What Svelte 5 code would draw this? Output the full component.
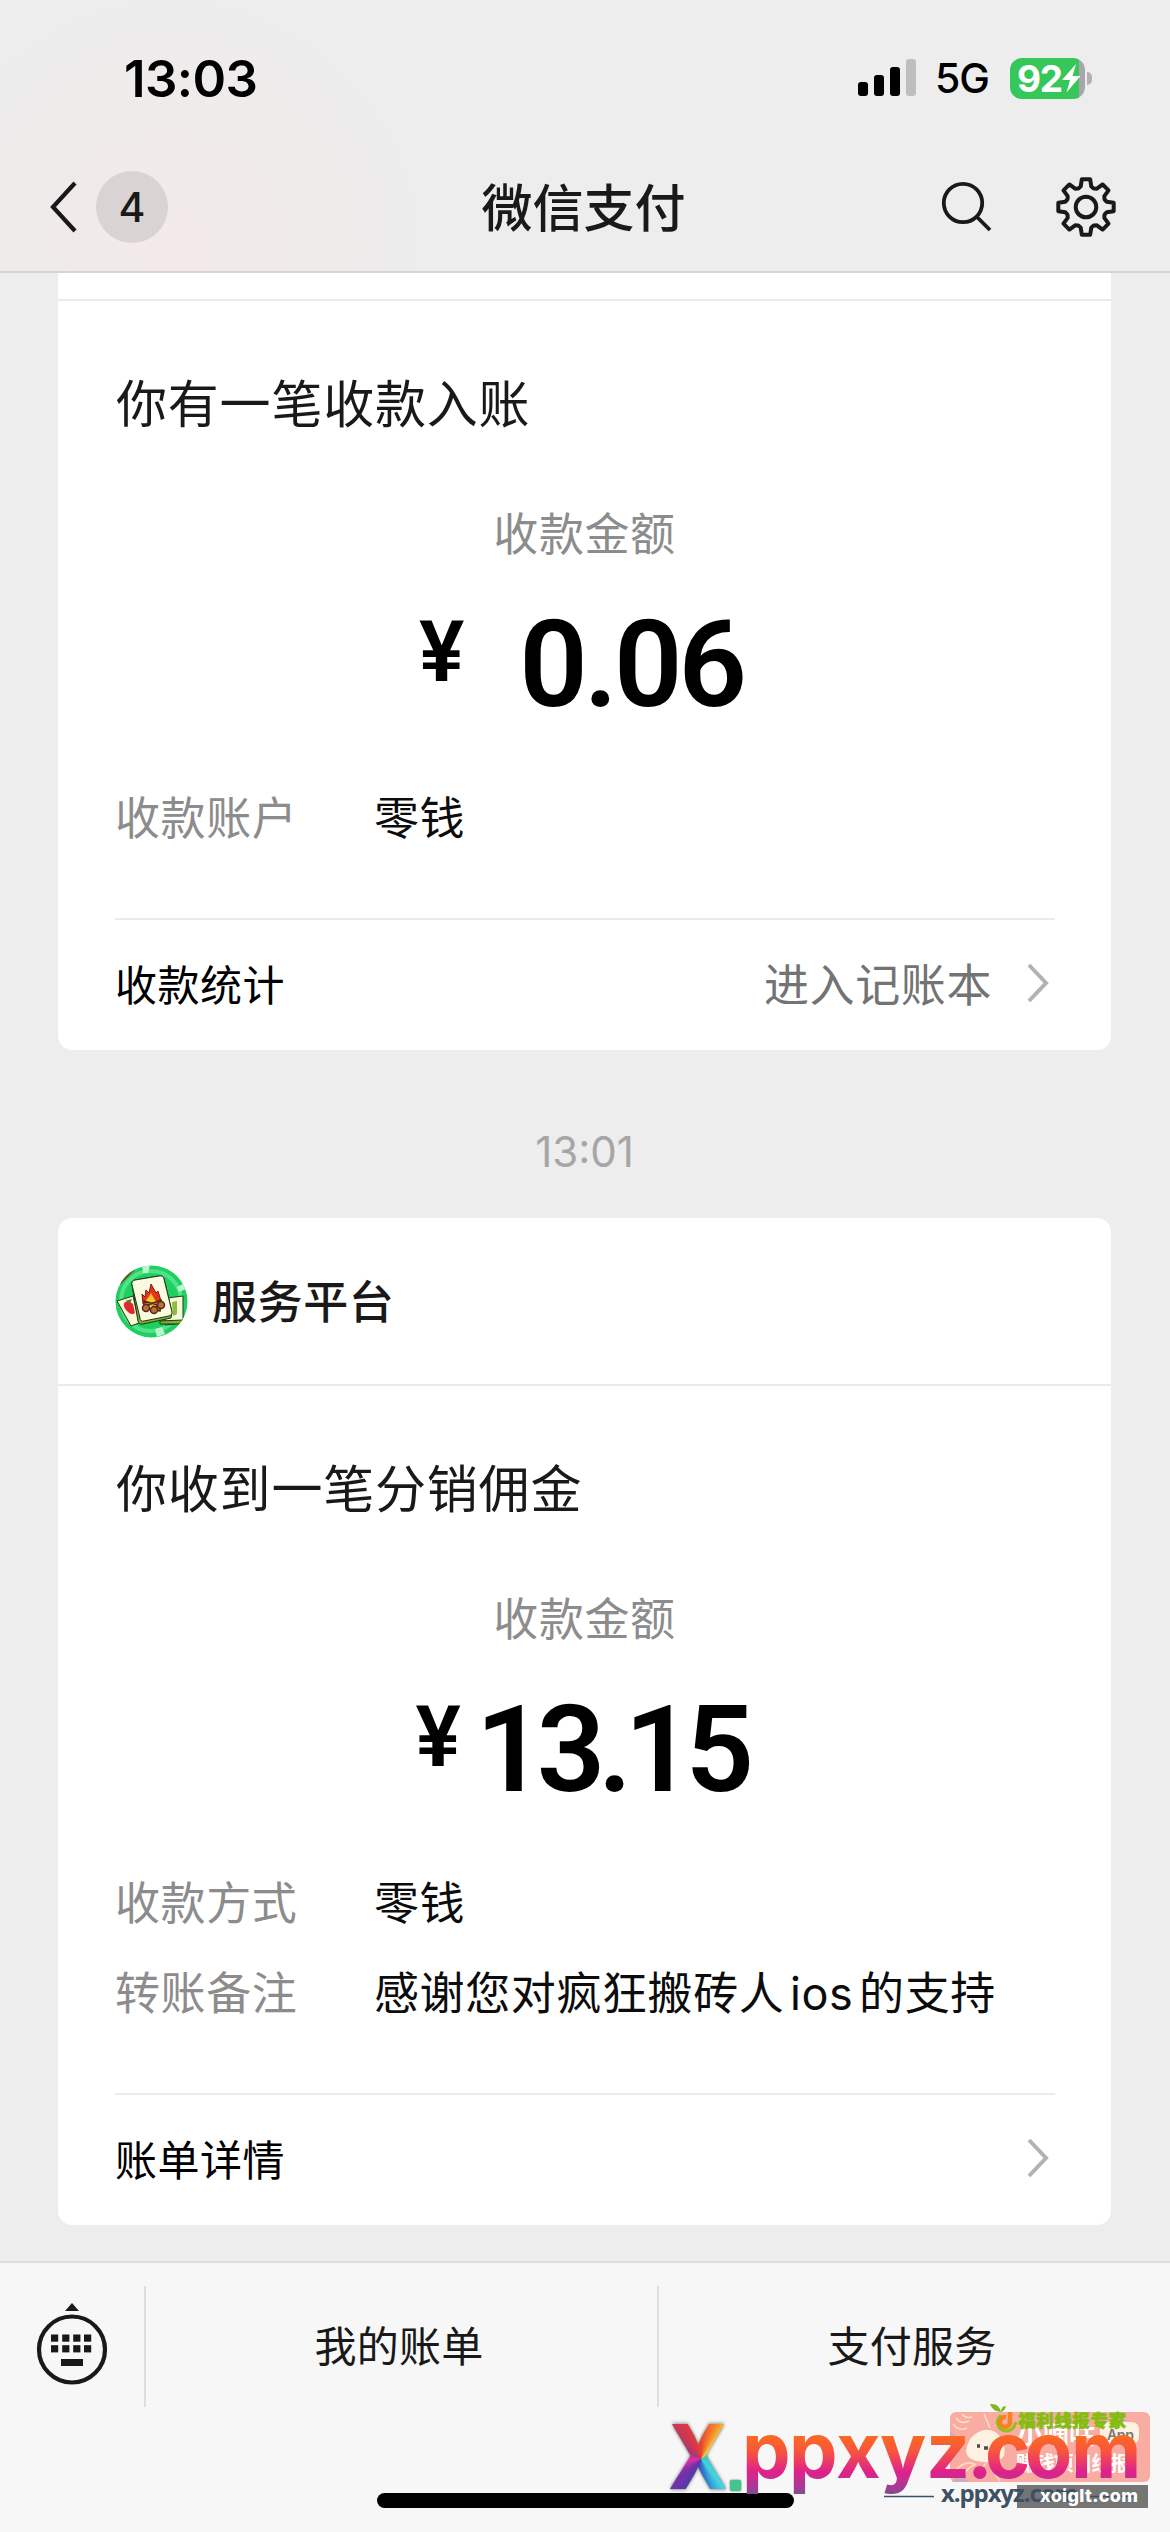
<!--
  WeChat Pay service conversation: status bar, nav bar, two payment cards,
  the service menu along the bottom and the site stamps over it.
-->
<script lang="ts">
  interface Row {
    label: string;
    value: string;
  }

  interface Card {
    sender?: string;
    title: string;
    amount: string;
    padded?: boolean;
    rows: Row[];
    footer: string;
    link?: string;
  }

  const income: Card = {
    title: "你有一笔收款入账",
    amount: "0.06",
    padded: true,
    rows: [{ label: "收款账户", value: "零钱" }],
    footer: "收款统计",
    link: "进入记账本",
  };

  const commission: Card = {
    sender: "服务平台",
    title: "你收到一笔分销佣金",
    amount: "13.15",
    rows: [
      { label: "收款方式", value: "零钱" },
      { label: "转账备注", value: "感谢您对疯狂搬砖人ios的支持" },
    ],
    footer: "账单详情",
  };

  const menu = ["我的账单", "支付服务"];
  const keys = [15, 26.2, 37.2, 48];

  /** Outline of the settings gear: eight tapered teeth around (32, 32). */
  function gearPath(): string {
    const pts: string[] = [];
    for (let i = 0; i < 8; i++) {
      const mid = (i * Math.PI) / 4;
      for (const [r, off] of [
        [20.2, -0.36],
        [21.3, -0.25],
        [28, -0.15],
        [28, 0.15],
        [21.3, 0.25],
        [20.2, 0.36],
      ]) {
        pts.push(`${(32 + r * Math.sin(mid + off)).toFixed(2)} ${(32 - r * Math.cos(mid + off)).toFixed(2)}`);
      }
    }
    return "M" + pts.join("L") + "Z";
  }
</script>

{#snippet card(c: Card)}
  <section class="card" class:is-cut={!c.sender}>
    <header class="card-head">
      {#if c.sender}
        <svg class="avatar" viewBox="0 0 73 73" aria-hidden="true">
          <defs>
            <clipPath id="disc"><circle cx="36.5" cy="36.5" r="36" /></clipPath>
          </defs>
          <g clip-path="url(#disc)">
            <rect width="73" height="73" fill="#20cf60" />
            <circle cx="36" cy="36" r="30" fill="none" stroke="#4fe38a" stroke-width="4" />
            <path d="M27 0h8l-2 8h-5zM62 22l6-3 3 5-7 3zM40 64l7-2 3 7-8 3z" fill="#b9f8cf" />
            <path d="M4 18L19 3" stroke="#7a4a25" stroke-width="4" />
            <g stroke="#1d3a18" stroke-width="1">
              <path d="M2 36l16-5 6 27-8 3z" fill="#f5f7d5" />
              <path d="M52 33l16-2v27l-18 2z" fill="#f5f7d5" />
              <path d="M45 56l23-1v4H45z" fill="#7fae35" />
              <path d="M17 20q-1-4 3-5l24-4q4-1 5 3l8 33-1 6-28 6q-4 1-5-3z" fill="#7fae35" />
              <path d="M17 20q-1-4 3-5l24-4q4-1 5 3l8 33q1 3-3 4l-25 5q-4 1-4-3z" fill="#fbfbe2" />
            </g>
            <path d="M57 37l5-1v13l-4 2z" fill="#8dbb45" />
            <path d="M9 38q5-3 9 1l2 9q-4 3-8-2-4-4-3-8z" fill="#e2282e" />
            <path d="M10 36l7-2-2 4z" fill="#35852b" />
            <path d="M28 39l-1-10 3 3 1-7 3 3 2-9 5 9 2-2 3 10-2 5z" fill="#e5331d" stroke="#7a1c10" stroke-width="1" />
            <path d="M31 40q-1-5 2-7l3-5 4 7q3 2 1 6z" fill="#ffc52e" />
            <g fill="#b9713a" stroke="#582c14" stroke-width="1.5">
              <path d="M29 36l17 5-1 5-16-4zM46 35l-18 7 2 4 17-6z" />
              <circle cx="31" cy="43" r="3.5" />
              <circle cx="39" cy="45" r="3.5" />
              <circle cx="46" cy="40" r="3.5" />
            </g>
          </g>
        </svg>
        <span class="sender">{c.sender}</span>
      {/if}
    </header>
    <h2 class="card-title">{c.title}</h2>
    <p class="amount-label">收款金额</p>
    <p class="amount" class:is-padded={c.padded}>
      <span class="yen">¥</span><span class="figure">{c.amount}</span>
    </p>
    <dl class="rows">
      {#each c.rows as row}
        <div class="row">
          <dt>{row.label}</dt>
          <dd>{row.value}</dd>
        </div>
      {/each}
    </dl>
    <footer class="card-foot">
      <span>{c.footer}</span>
      <span class="foot-link">
        {c.link ?? ""}
        <svg width="24" height="42" viewBox="0 0 24 42" aria-hidden="true">
          <path d="M3 3L20 21L3 39" fill="none" stroke="#b2b2b2" stroke-width="4" />
        </svg>
      </span>
    </footer>
  </section>
{/snippet}

<div class="screen">
  <header class="top">
    <div class="status">
      <span class="clock">13:03</span>
      <div class="status-right">
        <svg width="58" height="38" viewBox="0 0 58 38" aria-hidden="true">
          <rect x="0" y="23" width="10" height="14" rx="3" />
          <rect x="16" y="16" width="10" height="21" rx="3" />
          <rect x="32" y="8" width="10" height="29" rx="3" />
          <rect x="48" y="0" width="10" height="37" rx="3" fill="#bebebe" />
        </svg>
        <span class="network">5G</span>
        <div class="battery">
          <span>92</span>
          <svg width="19" height="29" viewBox="0 0 19 29" aria-hidden="true">
            <path d="M14 0L0 16h8L4.500 28.500 18.500 12h-8z" fill="#fff" />
          </svg>
        </div>
        <i class="battery-nub"></i>
      </div>
    </div>
    <nav class="nav">
      <div class="nav-side">
        <svg width="30" height="56" viewBox="0 0 30 56" aria-hidden="true">
          <path d="M26 4L4 28L26 52" fill="none" stroke="#191919" stroke-width="4.200" />
        </svg>
        <span class="unread">4</span>
      </div>
      <h1>微信支付</h1>
      <div class="nav-side is-right">
        <svg width="52" height="52" viewBox="0 0 52 52" fill="none" stroke="#191919" stroke-width="3.800" aria-hidden="true">
          <circle cx="22" cy="22" r="19.200" />
          <path d="M35.500 35.500L49 49" />
        </svg>
        <svg width="64" height="64" viewBox="0 0 64 64" fill="none" stroke="#191919" stroke-width="4" stroke-linejoin="round" aria-hidden="true">
          <path d={gearPath()} />
          <circle cx="32" cy="32" r="10.300" />
        </svg>
      </div>
    </nav>
  </header>

  <main class="chat">
    {@render card(income)}
    <time class="stamp">13:01</time>
    {@render card(commission)}
  </main>

  <footer class="menu">
    <div class="menu-row">
      <div class="keyboard">
        <svg width="72" height="84" viewBox="0 0 72 84" fill="#191919" aria-hidden="true">
          <path d="M36 0l7 8H29z" />
          <circle cx="36" cy="46.500" r="33" fill="none" stroke="#191919" stroke-width="4.200" />
          {#each keys as x}
            <rect {x} y="31.500" width="7.200" height="7.200" />
            <rect {x} y="42.200" width="7.200" height="7.200" />
          {/each}
          <rect x="25" y="56" width="22" height="7" />
        </svg>
      </div>
      {#each menu as item}
        <div class="menu-item">{item}</div>
      {/each}
    </div>
    <div class="home-bar"></div>
  </footer>

  <div class="marks">
    <svg width="510" height="122" viewBox="660 2400 510 122" aria-hidden="true">
      <defs>
        <linearGradient id="sunset" gradientUnits="userSpaceOnUse" x1="0" y1="2436" x2="0" y2="2494">
          <stop offset="0" stop-color="#fb6a22" />
          <stop offset="0.260" stop-color="#f8553c" />
          <stop offset="0.620" stop-color="#de218c" />
          <stop offset="0.760" stop-color="#c42e90" />
          <stop offset="1" stop-color="#854a92" />
        </linearGradient>
      </defs>

      <rect x="950" y="2412" width="200" height="70" rx="6" fill="#f8aca2" />
      <g fill="none" stroke="#fbe0c8" stroke-width="1.500">
        <path d="M953 2424q6 8 14 4M956 2418q5 7 13 3M962 2414q4 5 10 3M984 2414l6 14M1000 2414l-4 12M954 2472q10-12 20-8M962 2478q4-10 14-14M980 2479q2-12 6-16M992 2470l8 11M998 2464l12 14" />
      </g>
      <path d="M950 2430l8 10-8 10zM952 2482l10-14 6 14z" fill="#b5aacb" opacity="0.6" />
      <path d="M984 2430q12-2 18 10 4 8 2 16-6 8-20 6-16-1-18-10 2-18 18-22z" fill="#fdf1e2" />
      <path d="M977 2446h3M984 2448h4" stroke="#54484b" stroke-width="3.500" />
      <text class="badge-text" x="1017" y="2444" font-size="26" textLength="78">小嘀咕</text>
      <text class="badge-text" x="1016" y="2471" font-size="20" textLength="114">赚钱项目线报</text>
      <rect x="1100" y="2422" width="39" height="22" rx="7" fill="#fdf1e2" />
      <text x="1107" y="2440" font-family="Inter, sans-serif" font-weight="600" font-size="14" fill="#777" textLength="27">App</text>

      <path d="M1001 2415q-8 9 1 15 10 4 14-8" fill="none" stroke="#8dc21f" stroke-width="3" />
      <path d="M990 2404q9-1 11 8-9-1-11-8zM1001 2412q0-6 5-6-1 5-5 6z" fill="#7dba1c" />
      <path d="M1010 2412v11a5 5 0 1 1-4-6" fill="none" stroke="#f5841f" stroke-width="4.500" />
      <text x="1018" y="2427" font-family="Noto Sans CJK SC, sans-serif" font-weight="900" font-size="17.500" fill="#84bd12" stroke="#84bd12" stroke-width="0.600" textLength="108">福利线报专家</text>

      <rect x="1017" y="2485" width="131" height="23" fill="#4a4a4a" opacity="0.750" />
      <path d="M884 2496.500h50M1086 2496.500h50" stroke="#3d5064" stroke-width="1.500" />
      <text x="941" y="2502" font-family="Open Sans, sans-serif" font-weight="700" font-size="24" fill="#3d5064" textLength="137">x.ppxyz.com</text>
      <text x="1040" y="2502" font-family="Inter, sans-serif" font-weight="800" font-size="18" fill="#fff" textLength="98">xoiglt.com</text>

      <text class="site" y="2478" x="742 789 836 880 926 967 985 1025 1071" fill="url(#sunset)">ppxyz.com</text>
    </svg>
    <span class="mark-x">X</span>
    <i class="mark-dot"></i>
  </div>
</div>

<style>
  :global(body) {
    background: #ededed;
  }

  .screen {
    position: relative;
    width: 1170px;
    height: 2532px;
    overflow: hidden;
    display: flex;
    flex-direction: column;
    background: #ededed;
    color: #191919;
    font-family: Inter, "Noto Sans CJK SC", sans-serif;
  }

  h1,
  h2,
  p,
  dl,
  dt,
  dd {
    margin: 0;
    font-weight: 400;
  }

  svg {
    display: block;
    flex: none;
  }

  /* ---- status + nav ---- */
  .top {
    box-sizing: border-box;
    height: 273px;
    flex: none;
    border-bottom: 2px solid #d5d5d5;
    background: radial-gradient(circle at 170px 250px, #f2eae9 0, #efebea 130px, #ededed 260px);
  }

  .status {
    height: 142px;
    box-sizing: border-box;
    padding: 14px 78px 0 124px;
    display: flex;
    align-items: center;
    justify-content: space-between;
    color: #000;
  }

  .clock {
    font-size: 51px;
    font-weight: 600;
    letter-spacing: -0.6px;
  }

  .status-right {
    display: flex;
    align-items: center;
  }

  .network {
    width: 54px;
    margin: 0 21px 0 19px;
    font-size: 41px;
    font-weight: 500;
    letter-spacing: -1px;
  }

  .battery {
    width: 75px;
    height: 41px;
    box-sizing: border-box;
    padding-left: 7px;
    border-radius: 12px;
    display: flex;
    align-items: center;
    background: linear-gradient(90deg, #35c759 69px, #aaa5ab 69px);
    color: #fff;
    font-size: 37px;
    font-weight: 700;
    letter-spacing: -1.4px;
  }

  .battery-nub {
    width: 5px;
    height: 13px;
    margin-left: 2px;
    border-radius: 0 6px 6px 0;
    background: #b3b0b3;
  }

  .nav {
    height: 130px;
    display: grid;
    grid-template-columns: 1fr auto 1fr;
    align-items: center;
  }

  .nav h1 {
    padding: 4px 3px 0 0;
    font-size: 51px;
    font-weight: 500;
    line-height: 60px;
  }

  .nav-side {
    display: flex;
    align-items: center;
    padding-left: 49px;
    gap: 17px;
  }

  .nav-side.is-right {
    justify-content: flex-end;
    padding: 0 52px 0 0;
    gap: 61px;
  }

  .unread {
    width: 72px;
    height: 72px;
    border-radius: 50%;
    background: #d9d3d4;
    font-size: 41px;
    font-weight: 500;
    line-height: 72px;
    text-align: center;
  }

  /* ---- cards ---- */
  .chat {
    flex: 1;
    min-height: 0;
    display: flex;
    flex-direction: column;
    padding: 0 59px 0 58px;
  }

  .card {
    box-sizing: border-box;
    border-radius: 14px;
    background: #fff;
  }

  .card.is-cut {
    border-radius: 0 0 14px 14px;
  }

  .card-head {
    box-sizing: border-box;
    height: 168px;
    padding-left: 57px;
    display: flex;
    align-items: center;
    gap: 24px;
    border-bottom: 2px solid #ebebeb;
  }

  .is-cut .card-head {
    height: 28px;
  }

  .avatar {
    width: 73px;
    height: 73px;
  }

  .sender {
    padding-bottom: 4px;
    font-size: 45px;
    font-weight: 500;
    letter-spacing: 0.6px;
  }

  .card-title {
    padding: 68px 0 0 58px;
    font-size: 51px;
    line-height: 72px;
    letter-spacing: 0.8px;
  }

  .amount-label {
    padding-top: 62px;
    color: #8c8c8c;
    font-size: 45px;
    line-height: 64px;
    letter-spacing: 0.6px;
    text-align: center;
  }

  .amount {
    height: 120px;
    margin-top: 38px;
    padding-right: 7px;
    display: flex;
    justify-content: center;
    align-items: flex-start;
    gap: 15px;
    color: #000;
    font-family: Roboto, sans-serif;
    font-weight: 600;
    letter-spacing: -7.5px;
  }

  .amount.is-padded {
    gap: 55px;
    letter-spacing: -4px;
  }

  .yen {
    font-size: 85px;
    line-height: 94px;
    letter-spacing: 0;
  }

  .figure {
    font-size: 120px;
    line-height: 120px;
  }

  .rows {
    padding: 45px 0 0 57px;
  }

  .row {
    display: flex;
    height: 90px;
    align-items: center;
    font-size: 45px;
    letter-spacing: 0.6px;
  }

  dt {
    width: 259px;
    color: #8c8c8c;
  }

  dd {
    color: #0c0c0c;
    text-autospace: normal;
  }

  .card-foot {
    box-sizing: border-box;
    height: 132px;
    margin: 58px 56px 0 57px;
    padding: 0 5px 5px 0;
    border-top: 2px solid #ebebeb;
    display: flex;
    align-items: center;
    justify-content: space-between;
    color: #000;
    font-size: 42px;
    letter-spacing: 0.5px;
  }

  .foot-link {
    display: flex;
    align-items: center;
    gap: 34px;
    color: #737373;
    font-size: 45px;
    letter-spacing: 0.6px;
  }

  .stamp {
    height: 168px;
    line-height: 204px;
    color: #a6a6a6;
    font-size: 42px;
    text-align: center;
  }

  /* ---- bottom menu ---- */
  .menu {
    box-sizing: border-box;
    height: 271px;
    flex: none;
    border-top: 2px solid #dedede;
    background: #f7f7f7;
  }

  .menu-row {
    display: grid;
    grid-template-columns: 144px 513px 513px;
    padding-top: 23px;
    height: 120px;
  }

  .keyboard {
    display: grid;
    place-items: center;
    padding-bottom: 4px;
  }

  .menu-item {
    padding-right: 5px;
    border-left: 2px solid #dedede;
    font-size: 42px;
    line-height: 121px;
    letter-spacing: 0.3px;
    text-align: center;
  }

  .home-bar {
    width: 417px;
    height: 15px;
    margin: 87px auto 0;
    border-radius: 8px;
    background: #000;
  }

  /* ---- site stamps ---- */
  .marks {
    position: absolute;
    left: 660px;
    top: 2400px;
  }

  .badge-text {
    fill: #fff;
    font-family: "Noto Sans CJK SC", sans-serif;
    font-weight: 700;
  }

  .site {
    font-family: Inter, sans-serif;
    font-size: 77px;
    font-weight: 700;
  }

  .mark-x {
    position: absolute;
    left: 8px;
    top: 7px;
    font-size: 89px;
    font-weight: 800;
    line-height: 100px;
    color: transparent;
    transform: scaleX(0.89);
    transform-origin: 0 0;
    background: conic-gradient(
      from 0deg at 55% 52%,
      #e8452f 0deg,
      #f6822c 25deg,
      #f3d03c 42deg,
      #36c7b0 70deg,
      #45d3e0 140deg,
      #2f7fd0 165deg,
      #4a3ea8 205deg,
      #7a2fa8 235deg,
      #e42bb0 262deg,
      #a8386f 300deg,
      #d8384a 330deg,
      #e8452f 360deg
    );
    background-clip: text;
    -webkit-background-clip: text;
    filter: drop-shadow(0 0 2px rgba(40, 40, 40, 0.7));
  }

  .mark-dot {
    position: absolute;
    left: 70px;
    top: 80px;
    width: 11px;
    height: 11px;
    border-radius: 2px;
    background: #43c590;
    box-shadow: 0 0 2px #555;
  }
</style>
